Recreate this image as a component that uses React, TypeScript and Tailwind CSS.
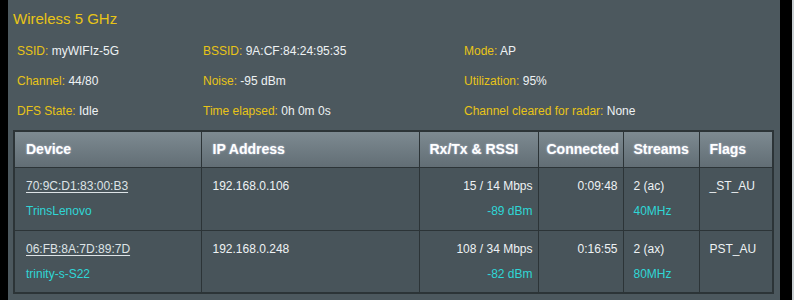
import React from "react";

const info = [
  [
    ["SSID", "myWIFIz-5G"],
    ["BSSID", "9A:CF:84:24:95:35"],
    ["Mode", "AP"],
  ],
  [
    ["Channel", "44/80"],
    ["Noise", "-95 dBm"],
    ["Utilization", "95%"],
  ],
  [
    ["DFS State", "Idle"],
    ["Time elapsed", "0h 0m 0s"],
    ["Channel cleared for radar", "None"],
  ],
];

const clients = [
  {
    mac: "70:9C:D1:83:00:B3",
    name: "TrinsLenovo",
    ip: "192.168.0.106",
    rate: "15 / 14 Mbps",
    rssi: "-89 dBm",
    time: "0:09:48",
    streams: "2 (ac)",
    bw: "40MHz",
    flags: "_ST_AU",
  },
  {
    mac: "06:FB:8A:7D:89:7D",
    name: "trinity-s-S22",
    ip: "192.168.0.248",
    rate: "108 / 34 Mbps",
    rssi: "-82 dBm",
    time: "0:16:55",
    streams: "2 (ax)",
    bw: "80MHz",
    flags: "PST_AU",
  },
];

const App = () => {
  return (
    <div className="flex h-[300px] w-[810px] overflow-hidden bg-white font-['Liberation_Sans',Arial,sans-serif]">
      <div className="w-[8px] bg-black" />
      <div className="w-[772px] bg-[#4c585e] pl-[5px]">
        {/* title */}
        <div className="pt-[9px] text-[15px] leading-[20px] text-[#e8c417]">
          Wireless 5 GHz
        </div>
        {/* info grid */}
        <div className="mt-[13px] flex flex-col gap-[12px] pl-[4px] text-[12px] leading-[18px]">
          {info.map((row, i) => (
            <div className="grid grid-cols-[186px_261px_1fr]" key={i}>
              {row.map(([k, v]) => (
                <span key={k}>
                  <span className="text-[#e8c417]">{k}: </span>
                  <span className="text-[#eef2f4]">{v}</span>
                </span>
              ))}
            </div>
          ))}
        </div>
        {/* clients table */}
        <table className="mt-[10px] w-[761px] border-collapse border-2 border-[#2c3437] text-[12px] leading-[18px]">
          <thead>
            <tr className="h-[36px] bg-gradient-to-b from-[#7e8b92] to-[#626e75] text-left text-[14px] font-bold text-white [text-shadow:0_0_2px_rgba(220,230,255,0.7)]">
              <th className="w-[187px] border border-[#2c3437] pl-[11px]">Device</th>
              <th className="w-[218px] border border-[#2c3437] pl-[11px]">IP Address</th>
              <th className="w-[119px] border border-[#2c3437] pl-[10px]">Rx/Tx &amp; RSSI</th>
              <th className="w-[85px] border border-[#2c3437] pl-[8px]">Connected</th>
              <th className="w-[76px] border border-[#2c3437] pl-[10px]">Streams</th>
              <th className="border border-[#2c3437] pl-[10px]">Flags</th>
            </tr>
          </thead>
          <tbody>
            {clients.map((c) => (
              <tr className="h-[63px] bg-[#48545a] align-top text-[#eef2f4]" key={c.mac}>
                <td className="border border-[#2c3437] pt-[9px] pl-[11px]">
                  <div className="text-[#dde3e6] underline underline-offset-2">{c.mac}</div>
                  <div className="mt-[7px] text-[#2fd6d6]">{c.name}</div>
                </td>
                <td className="border border-[#2c3437] pt-[9px] pl-[11px]">{c.ip}</td>
                <td className="border border-[#2c3437] pt-[9px] pr-[5px] text-right">
                  <div>{c.rate}</div>
                  <div className="mt-[7px] text-[#2fd6d6]">{c.rssi}</div>
                </td>
                <td className="border border-[#2c3437] pt-[9px] pr-[5px] text-right">{c.time}</td>
                <td className="border border-[#2c3437] pt-[9px] pl-[10px]">
                  <div>{c.streams}</div>
                  <div className="mt-[7px] text-[#2fd6d6]">{c.bw}</div>
                </td>
                <td className="border border-[#2c3437] pt-[9px] pl-[10px]">{c.flags}</td>
              </tr>
            ))}
          </tbody>
        </table>
      </div>
      <div className="w-[12px] bg-black" />
      <div className="w-[2px] bg-[#c9cfd2]" />
    </div>
  );
};

export default App;
